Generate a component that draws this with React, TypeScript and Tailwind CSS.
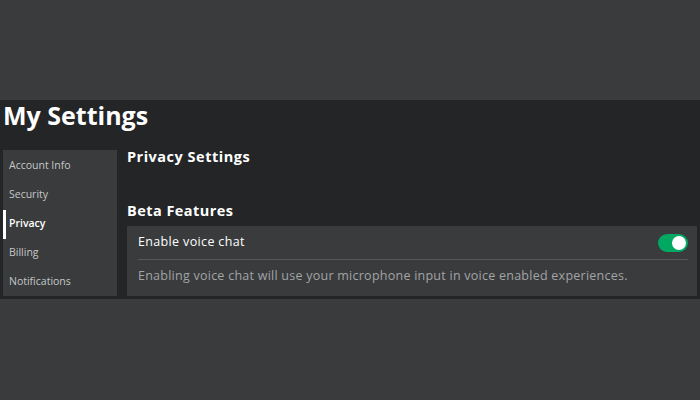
const NAV = ['Account Info', 'Security', 'Privacy', 'Billing', 'Notifications']

function Toggle() {
  return (
    <div className="w-[30px] h-[18px] rounded-full bg-[#00a862] flex items-center justify-end pr-[2px]">
      <div className="w-[14px] h-[14px] rounded-full bg-white" />
    </div>
  )
}

export default function App() {
  return (
    <div className="h-[400px] w-[700px] bg-[#3a3b3d] flex flex-col font-['Open_Sans',sans-serif] overflow-hidden">
      <div className="h-[100px] shrink-0" />
      <div className="h-[199px] shrink-0 bg-[#232527] flex flex-col">
        <h1 className="pl-[3px] text-[25px] leading-[30px] font-bold text-white">My Settings</h1>
        <div className="flex mt-[20px] pr-[3px]">
          <nav className="ml-[3px] w-[114px] h-[146px] bg-[#393b3d] flex flex-col pt-[1px]">
            {NAV.map((n) => (
              <div key={n} className="relative h-[29px] flex items-center pl-[6px]">
                {n === 'Privacy' && <div className="absolute left-0 top-[1px] bottom-[-1px] w-[3px] bg-white" />}
                <span className={`text-[10.5px] ${n === 'Privacy' ? 'text-white font-semibold' : 'text-[#c6c7c8]'}`}>{n}</span>
              </div>
            ))}
          </nav>
          <main className="ml-[10px] flex-1 flex flex-col">
            <h2 className="text-[14.5px] leading-[18px] font-bold text-white mt-[-2px] tracking-[0.5px]">Privacy Settings</h2>
            <h2 className="text-[14.5px] leading-[18px] font-bold text-white mt-[36px] tracking-[0.45px]">Beta Features</h2>
            <div className="mt-[6px] bg-[#393b3d] h-[70px] pl-[11px] pr-[9px] flex flex-col">
              <div className="h-[34px] flex items-center justify-between border-b border-[#55575a]">
                <span className="text-[12.5px] text-white tracking-[0.35px]">Enable voice chat</span>
                <Toggle />
              </div>
              <p className="mt-[7px] text-[12.5px] text-[#a3a4a6] tracking-[0.25px]">
                Enabling voice chat will use your microphone input in voice enabled experiences.
              </p>
            </div>
          </main>
        </div>
      </div>
    </div>
  )
}
